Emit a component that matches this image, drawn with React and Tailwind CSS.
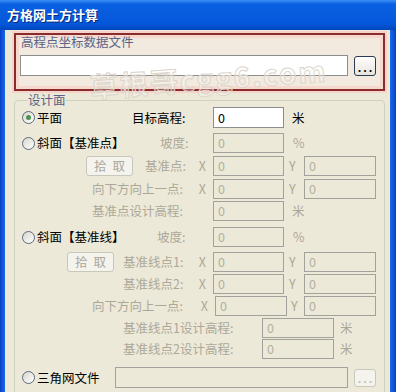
import React from 'react';

const font = "font-['Noto_Sans_CJK_SC',sans-serif]";

const Radio = ({ checked }) => (
  <span className="w-[13px] h-[13px] shrink-0 rounded-full border border-[#5b6b82] bg-gradient-to-br from-[#d8d6cc] to-white flex items-center justify-center">
    {checked ? <span className="w-[5px] h-[5px] rounded-full bg-[#4f8f4f]" /> : null}
  </span>
);

const Field = ({ w, on }) => (
  <div
    className={`${w} h-full shrink-0 border flex items-center pl-[4px] ${
      on ? 'bg-white border-[#8d8d8d] text-black' : 'bg-[#ece9d8] border-[#a2a29c] text-[#b3b0a3]'
    }`}
  >
    0
  </div>
);

const Pick = ({ ml }) => (
  <div className={`${ml} w-[47px] h-[20px] shrink-0 rounded-[3px] border border-[#c9c7ba] bg-[#f4f3ee] text-[#aca899] flex items-center justify-center tracking-[6px] pl-[6px]`}>
    拾取
  </div>
);

const XLabel = ({ w, text }) => (
  <div className={`${w} shrink-0 flex items-center justify-between pr-[7px] text-[#aca899]`}>
    <span>{text}</span>
    <span>X</span>
  </div>
);

const YPart = () => (
  <>
    <span className="w-[20px] shrink-0 pl-[5px] text-[#aca899]">Y</span>
    <Field w="w-[72px]" />
  </>
);

export default function App() {
  return (
    <div className={`relative w-[396px] h-[392px] overflow-hidden flex flex-col text-[12.5px] leading-[14px] ${font}`}>
      {/* title bar */}
      <div className="h-[30px] shrink-0 bg-[linear-gradient(180deg,#3d8ff6_0%,#0a60e2_14%,#0557da_80%,#0346bb_100%)] flex items-center pl-[7px]">
        <span className="text-white font-bold text-[13px] [text-shadow:1px_1px_0_#0a2a7a]">方格网土方计算</span>
      </div>

      <div className="flex-1 flex min-h-0">
        <div className="w-[5px] shrink-0 bg-[linear-gradient(90deg,#0840c8,#1a6ae8)]" />
        <div className="flex-1 bg-[#ece9d8] pl-[9px] pr-[5px] flex flex-col">
          {/* highlighted file box */}
          <div className="mt-[3px] h-[58px] shrink-0 border-2 border-[#8b2c2c] bg-[#f2e9df] shadow-[0_0_0_2px_#f5d3ca,inset_0_0_0_3px_#f6d8cf] pl-[4px] flex flex-col">
            <div className="pl-[1px] text-[#5a6488]">高程点坐标数据文件</div>
            <div className="mt-[6px] h-[21px] flex items-center">
              <div className="w-[328px] h-full bg-white border border-[#8d8d8d]" />
              <div className="ml-[6px] w-[22px] h-[20px] rounded-[3px] border border-[#2d3a55] bg-gradient-to-b from-white to-[#e6e4dc] flex items-end justify-center pb-[2px] text-[11px] leading-none font-bold tracking-[2px] pl-[2px]">
                ...
              </div>
            </div>
          </div>

          {/* design surface group */}
          <fieldset className="mt-[2px] flex-1 rounded-[4px] border border-[#d0d0bf] pl-[7px] pb-[20px] min-w-0">
            <legend className="ml-[6px] text-[#5a6488] leading-[14px]">设计面</legend>

            <div className="h-[21px] flex items-center">
              <div className="w-[110px] shrink-0 flex items-center gap-[2px]">
                <Radio checked />
                <span>平面</span>
              </div>
              <span className="w-[81px] shrink-0">目标高程:</span>
              <Field w="w-[71px]" on />
              <span className="ml-[8px]">米</span>
            </div>

            <div className="mt-[5px] h-[20px] flex items-center">
              <div className="w-[138px] shrink-0 flex items-center gap-[2px]">
                <Radio />
                <span>斜面【基准点】</span>
              </div>
              <span className="w-[53px] shrink-0 text-[#aca899]">坡度:</span>
              <Field w="w-[71px]" />
              <span className="ml-[9px] text-[#aca899]">%</span>
            </div>

            <div className="mt-[3px] h-[20px] flex items-center">
              <div className="w-[123px] shrink-0 flex items-center">
                <Pick ml="ml-[64px]" />
              </div>
              <XLabel w="w-[68px]" text="基准点:" />
              <Field w="w-[71px]" />
              <YPart />
            </div>

            <div className="mt-[3px] h-[20px] flex items-center">
              <div className="w-[70px] shrink-0" />
              <XLabel w="w-[121px]" text="向下方向上一点:" />
              <Field w="w-[71px]" />
              <YPart />
            </div>

            <div className="mt-[2px] h-[20px] flex items-center">
              <div className="w-[70px] shrink-0" />
              <span className="w-[121px] shrink-0 text-[#aca899]">基准点设计高程:</span>
              <Field w="w-[71px]" />
              <span className="ml-[8px] text-[#aca899]">米</span>
            </div>

            <div className="mt-[6px] h-[20px] flex items-center">
              <div className="w-[135px] shrink-0 flex items-center gap-[2px]">
                <Radio />
                <span>斜面【基准线】</span>
              </div>
              <span className="w-[56px] shrink-0 text-[#aca899]">坡度:</span>
              <Field w="w-[71px]" />
              <span className="ml-[9px] text-[#aca899]">%</span>
            </div>

            <div className="mt-[5px] h-[20px] flex items-center">
              <div className="w-[101px] shrink-0 flex items-center">
                <Pick ml="ml-[45px]" />
              </div>
              <XLabel w="w-[90px]" text="基准线点1:" />
              <Field w="w-[71px]" />
              <YPart />
            </div>

            <div className="mt-[2px] h-[20px] flex items-center">
              <div className="w-[101px] shrink-0" />
              <XLabel w="w-[90px]" text="基准线点2:" />
              <Field w="w-[71px]" />
              <YPart />
            </div>

            <div className="mt-[2px] h-[20px] flex items-center">
              <div className="w-[70px] shrink-0" />
              <XLabel w="w-[123px]" text="向下方向上一点:" />
              <Field w="w-[72px]" />
              <span className="w-[17px] shrink-0 pl-[4px] text-[#aca899]">Y</span>
              <Field w="w-[72px]" />
            </div>

            <div className="mt-[2px] h-[20px] flex items-center">
              <div className="w-[101px] shrink-0" />
              <span className="w-[139px] shrink-0 text-[#aca899]">基准线点1设计高程:</span>
              <Field w="w-[72px]" />
              <span className="ml-[6px] text-[#aca899]">米</span>
            </div>

            <div className="mt-[1px] h-[20px] flex items-center">
              <div className="w-[101px] shrink-0" />
              <span className="w-[139px] shrink-0 text-[#aca899]">基准线点2设计高程:</span>
              <Field w="w-[72px]" />
              <span className="ml-[6px] text-[#aca899]">米</span>
            </div>

            <div className="mt-[8px] h-[21px] flex items-center">
              <div className="w-[93px] shrink-0 flex items-center gap-[2px]">
                <Radio />
                <span>三角网文件</span>
              </div>
              <div className="w-[233px] h-full shrink-0 border border-[#a2a29c] bg-[#ece9d8]" />
              <div className="ml-[6px] w-[22px] h-[18px] rounded-[3px] border border-[#c9c7ba] bg-[#f4f3ee] flex items-end justify-center pb-[2px] text-[11px] leading-none font-bold tracking-[2px] pl-[2px] text-[#c4c2b6]">
                ...
              </div>
            </div>
          </fieldset>
        </div>
        <div className="w-[6px] shrink-0 bg-[linear-gradient(90deg,#1a6ae8,#0840c8)]" />
      </div>

      {/* watermark */}
      <div className="absolute left-[90px] top-[72px] -rotate-[4deg] origin-left text-[28px] leading-none font-bold tracking-[2px] text-white/30 [-webkit-text-stroke:1px_#dcd6cb] pointer-events-none">
        草根哥cgg6.com
      </div>
    </div>
  );
}
